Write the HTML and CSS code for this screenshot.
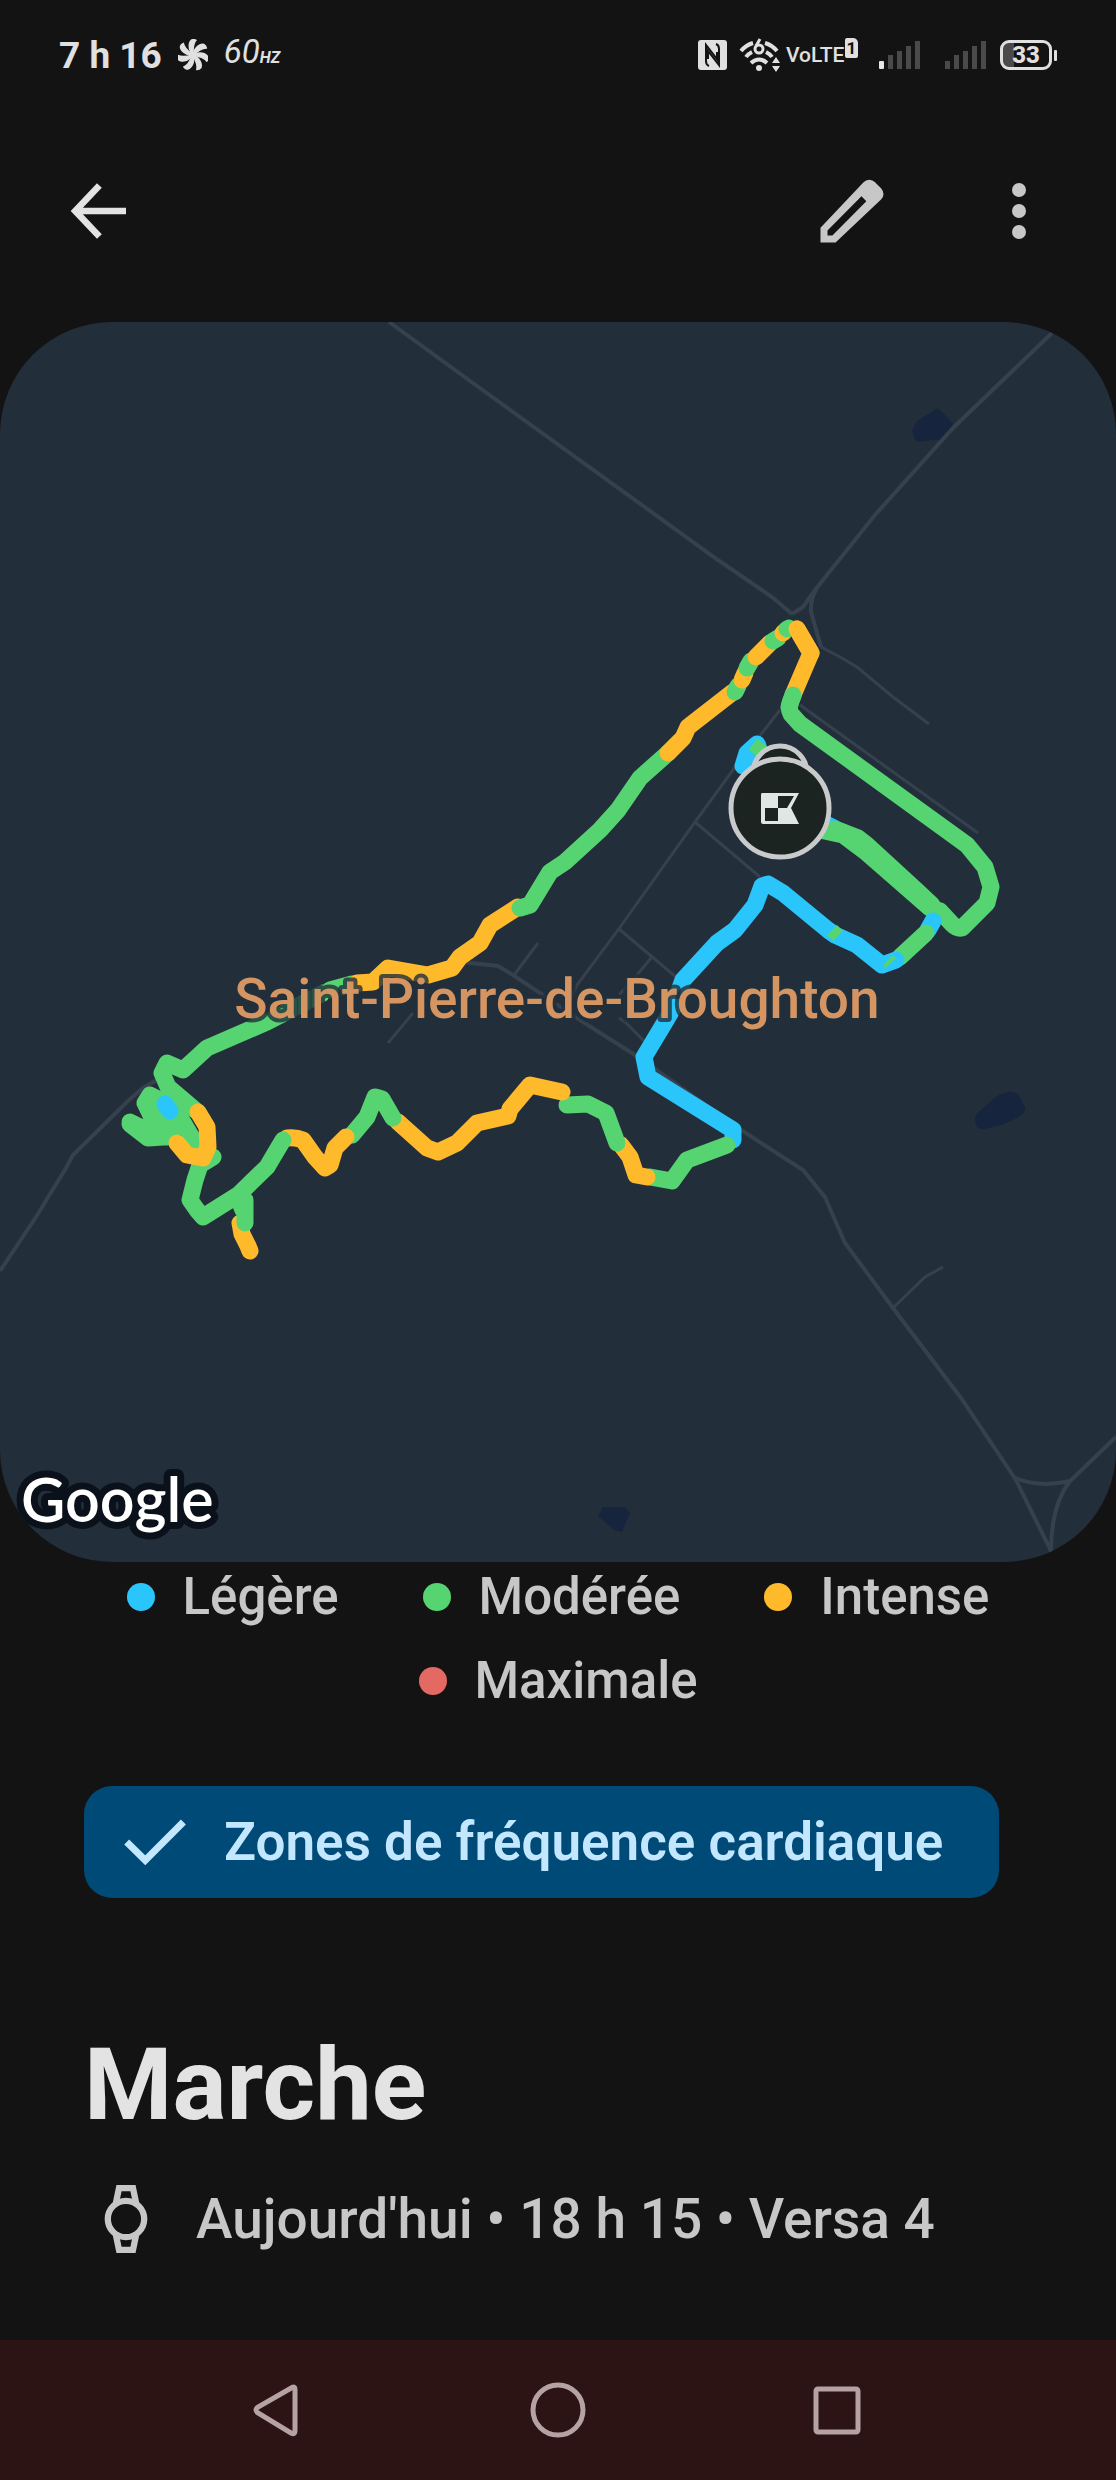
FILE: index.html
```html
<!DOCTYPE html>
<html lang="fr">
<head>
<meta charset="utf-8">
<meta name="viewport" content="width=device-width, initial-scale=1">
<title>Marche</title>
<link rel="stylesheet" href="styles.css">
</head>
<body>
<div class="status">
  <div class="status-left">
    <span class="time">7 h 16</span>
    <svg class="fan" viewBox="-15 -16 30 32" aria-hidden="true">
      <g fill="#e0e0e0">
        <path id="blade" d="M0 0C-5-3-6-12-2-15.500Q1-17 4-15Q0-11 1 0Z"/>
        <use href="#blade" transform="rotate(51)"/><use href="#blade" transform="rotate(103)"/><use href="#blade" transform="rotate(154)"/><use href="#blade" transform="rotate(206)"/><use href="#blade" transform="rotate(257)"/><use href="#blade" transform="rotate(309)"/>
      </g>
    </svg>
    <span class="rate">60<b class="hz">HZ</b></span>
  </div>
  <div class="status-right">
    <svg class="nfc" viewBox="0 0 29 30" aria-label="NFC">
      <rect width="29" height="30" rx="3" fill="#e0e0e0"/>
      <path d="M11 26Q8 25 8 21V5L19 19V12M18 4Q21 5 21 9V25L10 11V19" fill="none" stroke="#131313" stroke-width="2"/>
    </svg>
    <svg class="wifi" viewBox="0 0 42 34" aria-label="Wi-Fi 6">
      <g fill="none" stroke="#e0e0e0" stroke-width="4">
        <path d="M2 13Q7 7 14 5M26 5Q33 7 38 13M7 19Q9 16 13 14M27 14Q31 16 33 19M12 25Q20 18 28 25"/>
      </g>
      <circle cx="20" cy="30" r="3" fill="#e0e0e0"/>
      <path d="M33 25l4-6 4 6zM33 28h8l-4 6z" fill="#e0e0e0"/>
      <path d="M21 1L17 8" stroke="#e0e0e0" stroke-width="3"/><circle cx="20" cy="11" r="4" fill="none" stroke="#e0e0e0" stroke-width="3"/>
    </svg>
    <span class="volte">VoLTE</span><span class="sim">1</span>
    <svg class="bars first" viewBox="0 0 42 28" aria-label="Signal SIM 1">
      <path d="M9 14h5v14H9zM18 10h5v18h-5zM27 5h5v23h-5zM36 0h5v28h-5z" fill="#4a4a4a"/><rect y="20" width="5" height="8" rx="1" fill="#e8e8e8"/>
    </svg>
    <svg class="bars second" viewBox="0 0 42 28" aria-label="Signal SIM 2">
      <path d="M0 20h5v8H0zM9 14h5v14H9zM18 10h5v18h-5zM27 5h5v23h-5zM36 0h5v28h-5z" fill="#4a4a4a"/>
    </svg>
    <span class="battery"><span class="battery-body">33</span><span class="battery-tip"></span></span>
  </div>
</div>

<header class="appbar">
  <button class="icon-btn" aria-label="Retour">
    <svg viewBox="0 0 24 24"><path d="M12.400 4.700L5.500 12L12.400 19.300M6 12H20" fill="none" stroke="#e3e3e3" stroke-width="1.900"/></svg>
  </button>
  <span class="actions">
    <button class="icon-btn" aria-label="Modifier">
      <svg viewBox="0 0 24 24"><path fill="#c7c7c7" fill-rule="evenodd" d="M3 21V16.800L15.300 3.800Q16 3 17 3.050Q17.900 3.100 18.500 3.700L20.300 5.500Q21 6.300 21 7.200Q21 8 20.300 8.700L7.300 21ZM5 19H6.400L16.100 9.200L14.700 7.800L5 17.600Z"/></svg>
    </button>
    <button class="icon-btn" aria-label="Plus d’options">
      <svg viewBox="0 0 24 24" fill="#c7c7c7"><circle cx="12" cy="6" r="2"/><circle cx="12" cy="12" r="2"/><circle cx="12" cy="18" r="2"/></svg>
    </button>
  </span>
</header>

<main>
  <svg class="map" viewBox="0 322 1116 1240" role="img" aria-label="Carte du parcours">
    <g class="lake">
      <path d="M912 431L917 421 938 408 954 424 944 439 916 442Z"/>
      <path d="M975 1120Q975 1114 981 1110L992 1100Q1000 1093 1008 1092Q1016 1091 1020 1097L1025 1107Q1026 1112 1020 1116Q1005 1125 985 1129Q976 1131 975 1120Z"/>
      <path d="M598 1516L603 1507H625L630 1513 622 1532 614 1530Z"/>
    </g>
    <g class="road">
      <path class="major" d="M389 322L477 386L718 560L772 597L792 614M1052 333L954 427L875 515L815 590L803 607L792 614M817 588Q810 600 811 612L821 647"/>
      <path d="M821 647L840 657L857 667L893 697L929 724M800 705L978 833M780 710L733 770L695 822L618 930L577 985L568 1005M695 822L760 877M619 929L676 977M651 958L637 975L619 995M619 1018L626 1023L645 1042M413 1013L388 1043M538 943L514 975M893 1308L925 1277L943 1267"/>
      <path class="major" d="M462 962L498 966L513 975L583 1022L635 1055L738 1128L803 1170L825 1197L845 1243L893 1308L961 1398L1016 1480L1052 1553L1055 1565M1015 1478Q1040 1488 1070 1481M1116 1437L1070 1481Q1051 1505 1051 1552M157 1080L143 1088L127 1102L73 1155L66 1168L36 1217L0 1271"/>
    </g>
    <g class="track">
      <path class="light" d="M826 824L834 828"/>
      <path class="moderate" d="M793 696Q787 707 791 714L800 724L967 845L985 867L991 887L987 903L962 928Q957 929 952 924L940 911L930 908L867 853L843 835L820 830"/>
      <path class="moderate" d="M932 905L916 890L867 845L858 838L835 829"/>
      <path class="intense" d="M797 629L811 653L793 695"/>
      <path class="moderate" d="M793 695L789 707"/>
      <path class="light" d="M933 921L928 930"/>
      <path class="moderate" d="M926 933L900 957"/>
      <path class="light" d="M896 960L882 965L857 945L835 935L828 930L783 893L768 884L762 886L755 905L735 930L717 943L683 980L672 1010L665 1022L644 1057L648 1077L733 1130L733 1140"/>
      <path class="moderate butt" d="M888 960L891 963M832 930L838 936"/>
      <path class="moderate" d="M727 1145L687 1160L672 1181L650 1177"/>
      <path class="intense" d="M647 1177L636 1175L630 1157L621 1145"/>
      <path class="moderate" d="M617 1143L606 1113L588 1104L567 1105"/>
      <path class="intense" d="M562 1092L530 1085L510 1109L508 1116L477 1123L457 1143L438 1152L427 1148L398 1122"/>
      <path class="moderate" d="M393 1118L382 1099L375 1097L367 1117L352 1135"/>
      <path class="intense" d="M346 1137L335 1148L330 1165L325 1168L315 1157L303 1140Q296 1137 287 1138"/>
      <path class="intense" d="M240 1223L242 1234L248 1246L250 1251"/>
      <path class="moderate" d="M245 1200V1223M239 1200L243 1210"/>
      <path class="moderate" d="M283 1140L267 1167L238 1195L203 1217L197 1210L190 1200L195 1180L200 1165L213 1157"/>
      <path class="moderate" d="M323 993L267 1022L207 1048L183 1070L167 1063L162 1073L168 1087L195 1110"/>
      <path class="moderate" d="M195 1143L174 1107L150 1095L145 1103L153 1120L167 1137M130 1124L148 1138L163 1137M148 1102L163 1112L176 1128M130 1122L150 1132"/>
      <path class="light" d="M165 1104L170 1111"/>
      <path class="intense" d="M198 1112L207 1127L208 1147L203 1158L187 1155L177 1143"/>
      <path class="moderate" d="M330 990L352 984"/>
      <path class="intense" d="M357 983L373 982L388 968L428 975L452 968L460 957L480 943L490 925L518 907"/>
      <path class="moderate" d="M520 908L530 905L550 872L565 862L600 830L618 810L640 778L668 753"/>
      <path class="intense" d="M668 753L683 738L688 727L733 692"/>
      <path class="moderate" d="M735 692L738 686"/>
      <path class="intense" d="M742 680L745 673"/>
      <path class="moderate" d="M747 668L751 661"/>
      <path class="intense" d="M756 657L770 643"/>
      <path class="moderate" d="M773 641L778 638"/>
      <path class="intense" d="M783 633L784 632"/>
      <path class="moderate" d="M787 629L789 628"/>
      <path class="intense" d="M797 629L811 653"/>
      <path class="light" d="M757 744L747 753L743 766M758 746L750 760"/>
      <path class="moderate butt" d="M753 744L764 753"/>
    </g>
    <g class="marker">
      <circle cx="780" cy="773" r="27"/>
      <circle cx="780" cy="808" r="49"/>
      <path class="flag" fill-rule="evenodd" d="M762 793H799L791 808L799 824H763Q761 824 761 822V795Q761 793 762 793ZM778 796V808H787L794 796ZM765 808V821H778V808Z"/>
    </g>
    <text class="town" x="557" y="1018" text-anchor="middle">Saint-Pierre-de-Broughton</text>
    <text class="brand" x="21" y="1522">Google</text>
  </svg>

  <ul class="legend">
    <li><i class="dot dot-light"></i>Légère</li>
    <li><i class="dot dot-moderate"></i>Modérée</li>
    <li><i class="dot dot-intense"></i>Intense</li>
    <li><i class="dot dot-max"></i>Maximale</li>
  </ul>

  <section class="details">
    <button class="chip" aria-pressed="true">
      <svg class="icon" viewBox="0 0 24 24"><path d="M4.200 12L9.500 17.200L20.400 6.300" fill="none" stroke="#c2e7ff" stroke-width="2"/></svg>
      Zones de fréquence cardiaque
    </button>
    <h1 class="title">Marche</h1>
    <p class="meta">
      <svg class="icon" viewBox="0 0 24 24" aria-hidden="true"><g fill="none" stroke="#c7c7c7" stroke-width="1.800"><circle cx="12" cy="12" r="5.200"/><path d="M9 8L10 3.200H14L15 8M9 16L10 20.800H14L15 16"/></g></svg>
      <span>Aujourd'hui • 18 h 15 • Versa 4</span>
    </p>
  </section>
</main>

<nav class="sysnav">
  <button aria-label="Précédent"><svg viewBox="0 0 56 56"><path d="M43 5L8 25Q4 28 8 31L41 51Q45 53 45 49V7Q45 4 42 5.500"/></svg></button>
  <button aria-label="Accueil"><svg viewBox="0 0 56 56"><circle cx="28" cy="28" r="25"/></svg></button>
  <button aria-label="Applications récentes"><svg viewBox="0 0 56 56"><rect x="6" y="7" width="42" height="43" rx="2"/></svg></button>
</nav>
</body>
</html>
```
FILE: styles.css
```css
* { box-sizing: border-box; }

body {
  margin: 0;
  min-height: 100vh;
  display: flex;
  flex-direction: column;
  background: #131313;
  color: #c7c7c7;
  font-family: Roboto, "Liberation Sans", sans-serif;
  font-weight: 500;
}

button {
  margin: 0;
  padding: 0;
  border: 0;
  background: none;
  font: inherit;
  color: inherit;
}

svg { display: block; flex: none; }

/* system status bar */
.status {
  height: 110px;
  padding: 0 59px;
  display: flex;
  align-items: center;
  justify-content: space-between;
  color: #e0e0e0;
}
.status-left, .status-right { display: flex; align-items: center; }
.time { font-size: 37px; font-weight: 700; }
.fan { width: 30px; height: 32px; margin: 0 16px; }
.rate {
  font-size: 33px;
  font-style: italic;
  font-weight: 400;
  line-height: 40px;
}
.hz { font-size: 16px; font-weight: 700; }
.nfc { width: 29px; height: 30px; }
.wifi { width: 42px; height: 34px; margin: 0 5px 0 12px; }
.volte {
  width: 59px;
  font-size: 21px;
  line-height: 30px;
}
.sim {
  align-self: flex-start;
  width: 13px;
  height: 20px;
  border-radius: 2px 5px 2px 2px;
  background: #e0e0e0;
  color: #131313;
  font-size: 17px;
  font-weight: 700;
  line-height: 20px;
  text-align: center;
}
.bars { width: 42px; height: 28px; }
.first { margin: 0 24px 0 21px; }
.second { margin-right: 13px; }
.battery { display: flex; align-items: center; gap: 2px; }
.battery-body {
  width: 52px;
  height: 30px;
  border: 3px solid #e0e0e0;
  border-radius: 9px;
  background: linear-gradient(90deg, #4a4a4a 11px, transparent 11px);
  font-size: 24px;
  font-weight: 800;
  line-height: 25px;
  text-align: center;
}
.battery-tip { width: 3px; height: 11px; border-radius: 1px; background: #e0e0e0; }

/* app bar */
.appbar {
  padding: 59px 55px 69px 56px;
  display: flex;
  justify-content: space-between;
}
.actions { display: flex; gap: 83px; }
.icon-btn, .icon-btn svg, .icon { width: 84px; height: 84px; }

/* map */
.map {
  width: 100%;
  height: auto;
  border-radius: 112px;
  background: #232e3b;
}
.lake { fill: #17243d; }
.road { fill: none; stroke: #36414e; stroke-width: 3; }
.major { stroke-width: 4; }
.track {
  fill: none;
  stroke-width: 17;
  stroke-linecap: round;
  stroke-linejoin: round;
}
.light { stroke: #29c5fb; }
.moderate { stroke: #55d471; }
.intense { stroke: #ffba2c; }
.butt { stroke-linecap: butt; stroke-width: 14; }
.marker circle { fill: #1c2421; stroke: #c8cacb; stroke-width: 5; }
.marker .flag { fill: #e0e6e3; }
.town {
  font: 500 55px Roboto, sans-serif;
  fill: #d59563;
  stroke: rgba(32, 48, 60, .8);
  stroke-width: 8px;
  stroke-linejoin: round;
  paint-order: stroke;
}
.brand {
  font: 600 61px Lato, sans-serif;
  fill: #fff;
  stroke: #0b111b;
  stroke-width: 14px;
  stroke-linejoin: round;
  paint-order: stroke;
}

/* intensity legend */
.legend {
  margin: 0;
  padding: 0 56px;
  list-style: none;
  display: flex;
  flex-wrap: wrap;
  justify-content: center;
  gap: 14px 84px;
  font-size: 51px;
  line-height: 70px;
}
.legend li { display: flex; align-items: center; }
.dot { width: 28px; height: 28px; margin-right: 28px; border-radius: 50%; }
.dot-light { background: #29c5fb; }
.dot-moderate { background: #55d471; }
.dot-intense { background: #ffba2c; }
.dot-max { background: #e46962; }

/* activity details */
.details { padding: 70px 84px 79px; }
.chip {
  height: 112px;
  padding: 0 56px 0 28px;
  display: flex;
  align-items: center;
  gap: 28px;
  border-radius: 28px;
  background: #004a77;
  color: #c2e7ff;
  font-size: 53px;
  font-weight: 600;
  white-space: nowrap;
}
.title {
  margin: 127px 0 32px;
  color: #e3e3e3;
  font-size: 101px;
  line-height: 120px;
  font-weight: 700;
}
.meta {
  margin: 0;
  display: flex;
  align-items: center;
  gap: 28px;
  font-size: 55px;
}

/* system navigation */
.sysnav {
  margin-top: auto;
  height: 140px;
  display: flex;
  align-items: center;
  justify-content: center;
  gap: 224px;
  background: #2c1314;
}
.sysnav svg { width: 56px; height: 56px; fill: none; stroke: #b5a3a4; stroke-width: 5; }
```
